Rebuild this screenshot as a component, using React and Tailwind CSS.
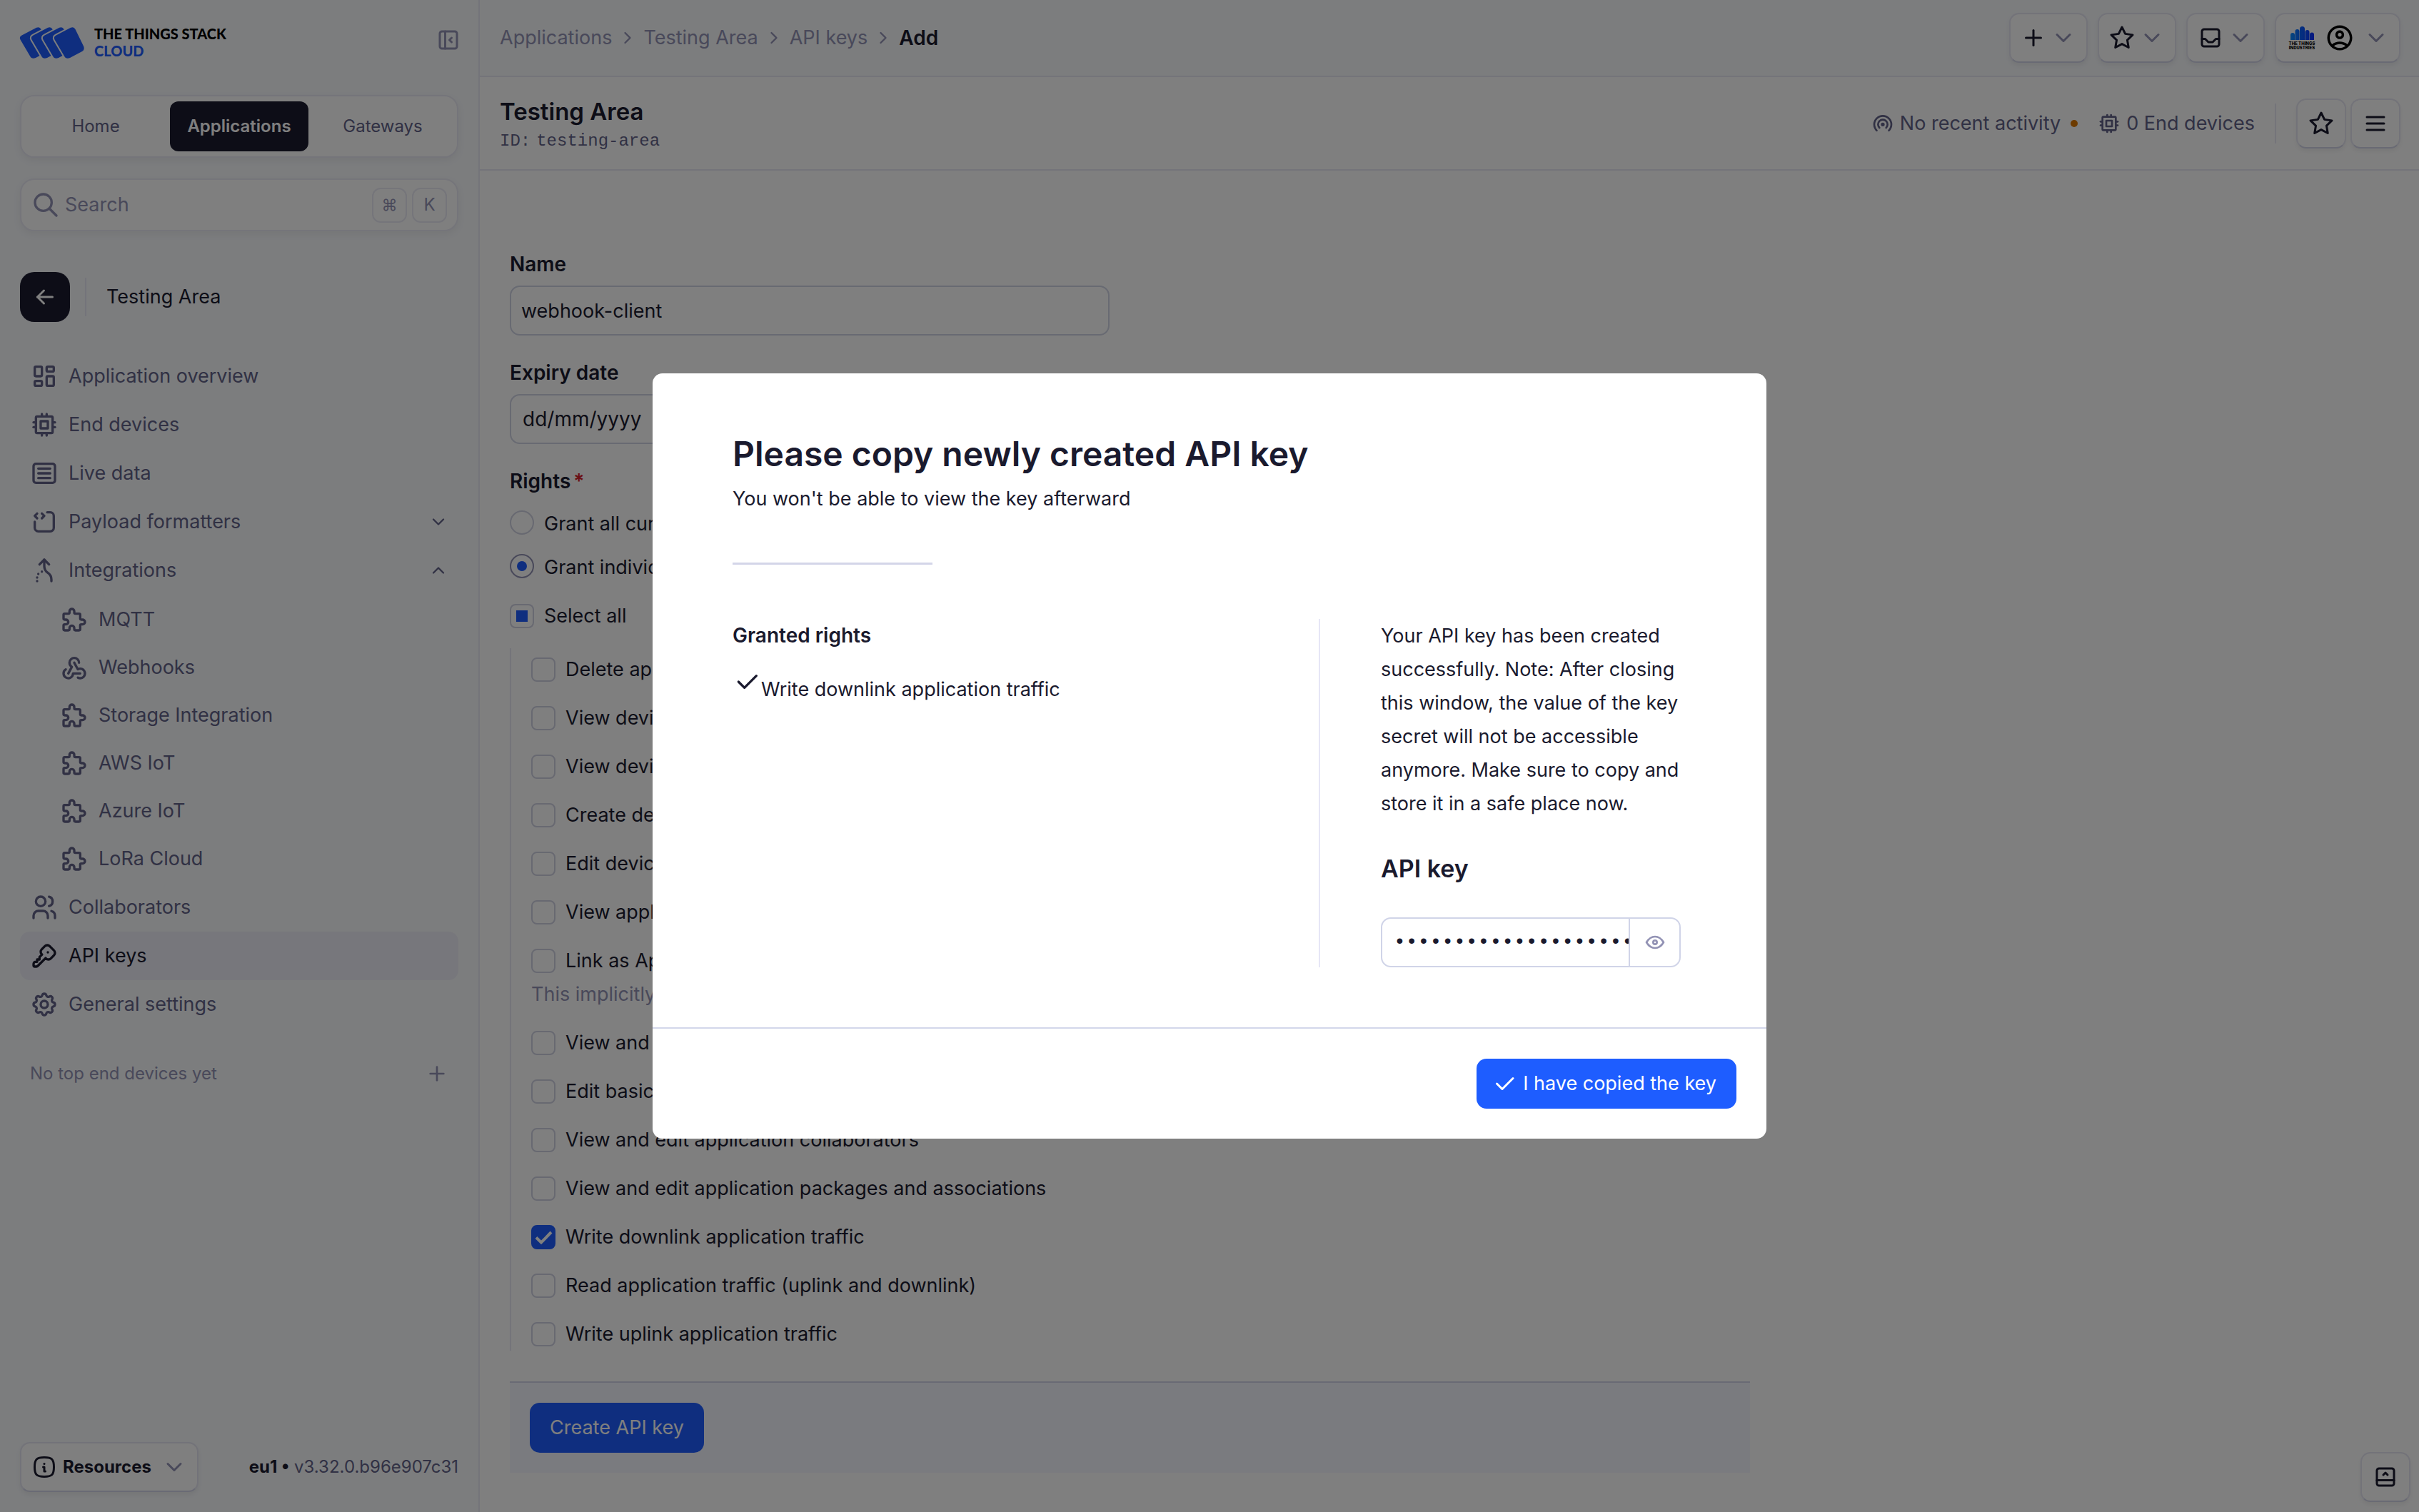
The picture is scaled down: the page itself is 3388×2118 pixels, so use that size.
import React from 'react'
import {
  TbArrowLeft, TbArticle, TbBroadcast, TbCheck, TbChevronDown, TbChevronRight, TbChevronUp, TbCpu,
  TbEye, TbInbox, TbInfoSquareRounded, TbKey, TbLayoutBottombarExpand, TbLayoutDashboard,
  TbLayoutSidebarLeftCollapse, TbMenu2, TbPlus, TbPuzzle, TbSearch, TbSettings, TbSourceCode,
  TbStar, TbUsers, TbWebhook,
} from 'react-icons/tb'
import { MdOutlineAccountCircle } from 'react-icons/md'

const MergeIcon = ({ className }) => (
  <svg viewBox="0 0 24 24" className={className} fill="none" stroke="currentColor" strokeWidth="2" strokeLinecap="round" strokeLinejoin="round" aria-hidden="true">
    <path d="M8 7l4 -4l4 4" />
    <path d="M6 21v.01" />
    <path d="M6 18.01v.01" />
    <path d="M7 15.02v.01" />
    <path d="M10 13.03v.01" />
    <path d="M12 3v5.394a6.737 6.737 0 0 0 3 5.606a6.737 6.737 0 0 1 3 5.606v1.394" />
  </svg>
)

const CARD = 'M50.5 11.5L71 .8Q75.5 -1.2 77.5 3L89.2 27Q91 31.500 87 34L70 43Q64.500 45.500 62 40.500L48.500 17.500Q46.500 13.500 50.500 11.500Z'

const StackLogo = () => (
  <svg viewBox="0 0 90 44" className="h-11 w-[90px] overflow-visible" aria-hidden="true">
    {[-48, -32, -16, 0].map(x => (
      <path key={x} d={CARD} transform={`translate(${x} 0)`} fill="#1e5dff" stroke="#f8fafd" strokeWidth="4" paintOrder="stroke" />
    ))}
  </svg>
)

const IndustriesLogo = () => (
  <span className="flex w-9 flex-col items-center">
    <svg viewBox="0 0 33 19" className="h-[19px] w-[33px]" aria-hidden="true">
      <defs>
        <linearGradient id="bars" x1="0" x2="1">
          <stop offset="0" stopColor="#0a8cff" />
          <stop offset="1" stopColor="#0a2cff" />
        </linearGradient>
      </defs>
      <path fill="url(#bars)" d="M0 19V12a3 3 0 0 1 6 0v7zM6.500 19V7a3 3 0 0 1 6 0v12zM13 19V3.500a3.500 3.500 0 0 1 7 0V19zM20.500 19V8a3 3 0 0 1 6 0v11zM27 19v-7.500a3 3 0 0 1 6 0V19z" />
    </svg>
    <span className="mt-[2px] text-center text-[6px] leading-[6px] font-extrabold whitespace-nowrap text-black">
      THE THINGS<br />INDUSTRIES
    </span>
  </span>
)

const mainItems = [
  { label: 'Application overview', Icon: TbLayoutDashboard },
  { label: 'End devices', Icon: TbCpu },
  { label: 'Live data', Icon: TbArticle },
]

const integrations = [
  { label: 'MQTT', Icon: TbPuzzle },
  { label: 'Webhooks', Icon: TbWebhook },
  { label: 'Storage Integration', Icon: TbPuzzle },
  { label: 'AWS IoT', Icon: TbPuzzle },
  { label: 'Azure IoT', Icon: TbPuzzle },
  { label: 'LoRa Cloud', Icon: TbPuzzle },
]

const NavLink = ({ label, Icon, active }) => (
  <li>
    <a
      href="#"
      aria-current={active ? 'page' : undefined}
      className={
        active
          ? 'flex h-[68px] items-center gap-[14px] rounded-[14px] bg-[#efeef8] px-[14px] text-[#1a1a2e]'
          : 'flex h-[68px] items-center gap-[14px] rounded-[14px] px-[14px] text-[#626288]'
      }
    >
      <Icon className="size-10" />
      {label}
    </a>
  </li>
)

const NavToggle = ({ label, Icon, open }) => (
  <button type="button" aria-expanded={open} className="flex h-[68px] w-full items-center gap-[14px] px-[14px] text-[#626288]">
    <Icon className="size-10" />
    {label}
    {open ? <TbChevronUp className="ml-auto size-7" /> : <TbChevronDown className="ml-auto size-7" />}
  </button>
)

const Sidebar = () => (
  <aside className="flex w-[672px] shrink-0 flex-col border-r-2 border-[#e8e8f4] bg-[#f8fafd] px-7 pb-7">
    <div className="flex h-[112px] items-center justify-between pt-2">
      <a href="#" className="flex items-center gap-[14px]">
        <StackLogo />
        <span className="pb-[2px] font-[Lato,sans-serif] text-[20px] leading-6 font-black text-black">
          THE THINGS STACK
          <span className="block text-[#1e5dff]">CLOUD</span>
        </span>
      </a>
      <button type="button" aria-label="Collapse sidebar" className="-mt-2 -mr-1 text-[#9292b4]">
        <TbLayoutSidebarLeftCollapse className="size-9" />
      </button>
    </div>

    <nav aria-label="Sections" className="mt-[21px] grid h-[88px] grid-cols-3 gap-[7px] rounded-[20px] border-2 border-[#eaeaf5] bg-white p-[7px] text-[24px] text-[#626288] shadow-[0_4px_12px_rgba(0,0,0,0.06)]">
      <a href="#" className="flex items-center justify-center rounded-xl">Home</a>
      <a href="#" className="flex items-center justify-center rounded-xl bg-[#1a1a2e] font-semibold text-white">Applications</a>
      <a href="#" className="flex items-center justify-center rounded-xl">Gateways</a>
    </nav>

    <label className="mt-[29px] flex h-[74px] items-center gap-[7px] rounded-[20px] border-2 border-[#eaeaf5] bg-white px-[14px] shadow-[0_4px_12px_rgba(0,0,0,0.06)]">
      <TbSearch className="size-10 shrink-0 text-[#9292b4]" />
      <input type="search" aria-label="Search" placeholder="Search" className="min-w-0 flex-1 bg-transparent outline-none placeholder:text-[#9292b4] placeholder:opacity-100" />
      <kbd className="flex size-[49px] items-center justify-center rounded-xl border-2 border-[#eaeaf5] font-[Inter,'DejaVu_Sans',sans-serif] text-[22px] text-[#9292b4]">⌘</kbd>
      <kbd className="flex size-[49px] items-center justify-center rounded-xl border-2 border-[#eaeaf5] font-[Inter,sans-serif] text-[24px] text-[#9292b4]">K</kbd>
    </label>

    <div className="mt-[57px] flex items-center">
      <button type="button" aria-label="Back" className="flex size-[70px] items-center justify-center rounded-[20px] bg-[#1a1a2e] text-white">
        <TbArrowLeft className="size-9" />
      </button>
      <span className="ml-[21px] h-[54px] w-[2px] bg-[#e8e8f4]" />
      <span className="ml-7 text-[#1a1a2e]">Testing Area</span>
    </div>

    <nav aria-label="Application" className="mt-[42px]">
      <ul>
        {mainItems.map(item => <NavLink key={item.label} {...item} />)}
        <li><NavToggle label="Payload formatters" Icon={TbSourceCode} /></li>
        <li>
          <NavToggle label="Integrations" Icon={MergeIcon} open />
          <ul className="py-px">
            {integrations.map(({ label, Icon }) => (
              <li key={label}>
                <a href="#" className="flex h-[67px] items-center gap-[14px] pl-14 text-[#626288]">
                  <Icon className="size-10" />
                  {label}
                </a>
              </li>
            ))}
          </ul>
        </li>
        <NavLink label="Collaborators" Icon={TbUsers} />
        <NavLink label="API keys" Icon={TbKey} active />
        <NavLink label="General settings" Icon={TbSettings} />
      </ul>
    </nav>

    <div className="mt-[42px] flex items-center justify-between px-[14px] text-[24px] text-[#9292b4]">
      No top end devices yet
      <button type="button" aria-label="Add end device"><TbPlus className="size-8" /></button>
    </div>

    <div className="mt-auto flex items-center justify-between text-[24px]">
      <button type="button" className="flex h-[70px] items-center gap-2 rounded-[14px] border-2 border-b-[#d3d5e8] border-[#e6e6f2] bg-white px-[14px] font-bold text-[#1a1a2e] shadow-[0_4px_6px_rgba(0,0,0,0.06)]">
        <TbInfoSquareRounded className="size-9" />
        Resources
        <TbChevronDown className="ml-[6px] size-9 text-[#9292b4]" />
      </button>
      <p className="text-[#626288]"><b className="font-bold text-[#1a1a2e]">eu1 •</b> v3.32.0.b96e907c31</p>
    </div>
  </aside>
)

const MenuButton = ({ label, children }) => (
  <button type="button" aria-label={label} className="flex h-[70px] items-center gap-[6px] rounded-[14px] border-2 border-b-[#d3d5e8] border-[#e6e6f2] bg-white px-[14px] text-[#1a1a2e] shadow-[0_4px_6px_rgba(0,0,0,0.06)]">
    {children}
    <TbChevronDown className="size-9 text-[#9292b4]" />
  </button>
)

const IconButton = ({ label, Icon }) => (
  <button type="button" aria-label={label} className="flex size-[70px] items-center justify-center rounded-[14px] border-2 border-b-[#d3d5e8] border-[#e6e6f2] bg-white text-[#1a1a2e] shadow-[0_4px_6px_rgba(0,0,0,0.06)]">
    <Icon className="size-9" />
  </button>
)

const Header = () => (
  <header className="flex h-[108px] items-center justify-between border-b-2 border-[#e8e8f4] bg-[#f8fafd] pr-[26px] pl-7">
    <nav aria-label="Breadcrumb">
      <ol className="flex items-center gap-2 text-[#9292b4]">
        {['Applications', 'Testing Area', 'API keys'].map(crumb => (
          <li key={crumb} className="flex items-center gap-2">
            <a href="#">{crumb}</a>
            <TbChevronRight className="size-7" />
          </li>
        ))}
        <li aria-current="page" className="text-[28px] font-semibold text-[#1a1a2e]">Add</li>
      </ol>
    </nav>
    <div className="flex items-center gap-[14px]">
      <MenuButton label="Create"><TbPlus className="size-9" /></MenuButton>
      <MenuButton label="Bookmarks"><TbStar className="size-9" /></MenuButton>
      <MenuButton label="Notifications"><TbInbox className="size-9" /></MenuButton>
      <MenuButton label="Account">
        <span className="flex items-center gap-[14px] pr-[6px] pl-1">
          <IndustriesLogo />
          <MdOutlineAccountCircle className="size-[42px] text-black" />
        </span>
      </MenuButton>
    </div>
  </header>
)

const TitleBar = () => (
  <div className="flex h-[131px] items-center justify-between border-b-2 border-[#e8e8f4] pr-[26px] pl-7">
    <div className="pt-[2px]">
      <h1 className="text-[33px] leading-[42px] font-semibold text-[#1a1a2e]">Testing Area</h1>
      <p className="mt-[7px] font-['Liberation_Mono',monospace] text-[24px] leading-7 text-[#626288]">
        <span className="mr-2">ID:</span>testing-area
      </p>
    </div>
    <div className="flex items-center text-[#626288]">
      <TbBroadcast className="size-8" />
      <span className="ml-2">No recent activity</span>
      <span className="ml-[14px] size-[10px] rounded-full bg-[#db7600]" />
      <TbCpu className="ml-7 size-8" />
      <span className="ml-2">0 End devices</span>
      <span className="mr-7 ml-7 h-14 w-[2px] bg-[#e8e8f4]" />
      <div className="flex gap-[6px]">
        <IconButton label="Add to bookmarks" Icon={TbStar} />
        <IconButton label="Menu" Icon={TbMenu2} />
      </div>
    </div>
  </div>
)

const rights = [
  { label: 'Delete application' },
  { label: 'View devices in application' },
  { label: 'View device keys in application' },
  { label: 'Create devices in application' },
  { label: 'Edit device keys in application' },
  { label: 'View application information' },
  {
    label: 'Link as Application to a Network Server for traffic exchange',
    note: 'This implicitly includes the rights to view application information and read application traffic',
  },
  { label: 'View and edit application API keys' },
  { label: 'Edit basic application settings' },
  { label: 'View and edit application collaborators' },
  { label: 'View and edit application packages and associations' },
  { label: 'Write downlink application traffic', checked: true },
  { label: 'Read application traffic (uplink and downlink)' },
  { label: 'Write uplink application traffic' },
]

const Right = ({ label, note, checked }) => (
  <li>
    <label className="flex h-[34px] items-center gap-[14px]">
      <span className="relative flex">
        <input type="checkbox" defaultChecked={checked} className="size-[34px] appearance-none rounded-lg border-2 border-[#d0d2e2] checked:border-[#1e5dff] checked:bg-[#1e5dff]" />
        {checked && (
          <svg viewBox="0 0 34 34" className="pointer-events-none absolute inset-0 size-[34px]" fill="none" stroke="#fff" strokeWidth="4" aria-hidden="true">
            <path d="M7 17.500l7 7L28 10" />
          </svg>
        )}
      </span>
      {label}
    </label>
    {note && <p className="mt-3 h-[35px] leading-[35px] text-[#9292b4]">{note}</p>}
  </li>
)

const Form = () => (
  <form className="mr-auto w-full max-w-[1821px] px-[42px] pt-[110px] pb-7 text-[#1a1a2e]" onSubmit={e => e.preventDefault()}>
    <label htmlFor="key-name" className="block text-[28px] leading-[42px] font-semibold">Name</label>
    <input id="key-name" type="text" defaultValue="webhook-client" className="mt-[9px] block h-[70px] w-full max-w-[840px] rounded-[14px] border-2 border-[#d0d4e4] bg-white px-[14px] outline-none" />

    <label htmlFor="key-expiry" className="mt-[31px] block text-[28px] leading-[42px] font-semibold">Expiry date</label>
    <input id="key-expiry" type="text" placeholder="dd/mm/yyyy" className="mt-[9px] block h-[70px] w-full max-w-[840px] rounded-[14px] border-2 border-[#d0d4e4] bg-white px-4 text-[28px] outline-none placeholder:text-[#1a1a2e] placeholder:opacity-100" />

    <fieldset className="mt-[31px]">
      <legend className="block text-[28px] leading-[42px] font-semibold">Rights<span className="ml-1 text-[#d6202a]">*</span></legend>
      <label className="mt-5 flex h-[34px] items-center gap-[14px]">
        <input type="radio" name="scope" className="size-[34px] appearance-none rounded-full border-2 border-[#d0d2e2]" />
        <span className="pt-1">Grant all current and future rights</span>
      </label>
      <label className="mt-[27px] flex h-[34px] items-center gap-[14px]">
        <input type="radio" name="scope" defaultChecked className="grid size-[34px] appearance-none place-content-center rounded-full border-2 border-[#9292b4] before:size-[14px] before:rounded-full before:bg-[#1e5dff]" />
        <span className="pt-1">Grant individual rights</span>
      </label>
      <label className="mt-9 flex h-[34px] items-center gap-[14px]">
        <input type="checkbox" className="grid size-[34px] appearance-none place-content-center rounded-lg border-2 border-[#d0d2e2] before:size-4 before:bg-[#1e5dff]" />
        Select all
      </label>
      <ul className="mt-7 flex flex-col gap-[34px] border-l-2 border-[#e8e8f4] pt-[13px] pb-[6px] pl-7">
        {rights.map(right => <Right key={right.label} {...right} />)}
      </ul>
    </fieldset>

    <div className="mt-[43px] border-t-2 border-[#d3d5e8] bg-[#f5f7ff] p-7">
      <button type="submit" className="h-[70px] rounded-[14px] bg-[#1e5dff] px-7 text-white">Create API key</button>
    </div>
  </form>
)

const KeyModal = () => (
  <div className="fixed inset-0 flex items-center justify-center bg-black/50">
    <div role="dialog" aria-modal="true" aria-labelledby="modal-title" className="w-full max-w-[1560px] rounded-[14px] bg-white text-[#1a1a2e]">
      <div className="px-28 pt-[83px] pb-[84px]">
        <h2 id="modal-title" className="text-[48px] leading-[60px] font-semibold">Please copy newly created API key</h2>
        <p className="mt-[9px] leading-[47px]">You won't be able to view the key afterward</p>
        <hr className="mt-[66px] w-[280px] border-0 border-b-3 border-[#d3d5e8]" />
        <div className="mt-[76px] flex pr-2">
          <section className="flex-1">
            <h3 className="text-[28px] leading-[47px] font-semibold">Granted rights</h3>
            <ul className="mt-[21px] leading-[47px]">
              <li className="flex items-baseline">
                <TbCheck className="size-10" />
                Write downlink application traffic
              </li>
            </ul>
          </section>
          <section className="w-[507px] border-l-2 border-[#e6e6f6] pl-[85px]">
            <p className="leading-[47px]">
              Your API key has been created successfully. Note: After closing this window, the value of the key secret will not be accessible anymore. Make sure to copy and store it in a safe place now.
            </p>
            <h3 className="mt-[46px] leading-[44px]"><label htmlFor="api-key" className="text-[34px] font-semibold">API key</label></h3>
            <div className="mt-[43px] flex h-[70px] rounded-[14px] border-2 border-[#d0d4e8]">
              <input id="api-key" type="password" readOnly defaultValue="NNSXS.webhook-client-key-secret" className="min-w-0 flex-1 pl-4 font-['Liberation_Mono',monospace] text-[28px] outline-none" />
              <button type="button" aria-label="Show key" className="flex w-[71px] items-center justify-center border-l-2 border-[#d0d4e8] text-[#9292b4]">
                <TbEye className="size-8" />
              </button>
            </div>
          </section>
        </div>
      </div>
      <div className="flex justify-end border-t-2 border-[#d3d7ea] p-[42px]">
        <button type="button" className="flex h-[70px] items-center gap-2 rounded-[14px] bg-[#1e5dff] pr-7 pl-[21px] text-white">
          <TbCheck className="size-9" />
          I have copied the key
        </button>
      </div>
    </div>
  </div>
)

export default function App() {
  return (
    <div className="flex min-h-screen bg-white font-[Inter,sans-serif] text-[27px] leading-[42px]">
      <Sidebar />
      <main className="min-w-0 flex-1">
        <Header />
        <TitleBar />
        <Form />
      </main>
      <div className="fixed right-3 bottom-[14px]">
        <IconButton label="Expand event panel" Icon={TbLayoutBottombarExpand} />
      </div>
      <KeyModal />
    </div>
  )
}
